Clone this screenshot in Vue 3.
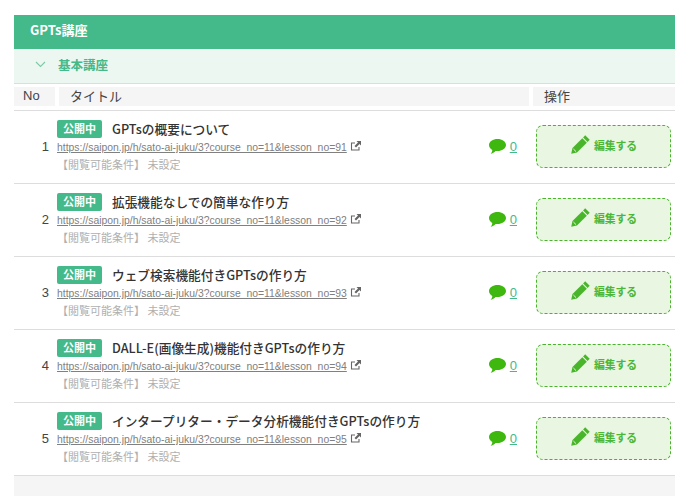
<template>
  <div class="page">
    <div class="panel">
      <div class="head">GPTs講座</div>
      <div class="sub">
        <svg class="chev" width="11" height="7" viewBox="0 0 11 7"><path d="M1 1l4.500 4.500L10 1" fill="none" stroke="#7cc9a8" stroke-width="1.1" /></svg>
        <span>基本講座</span>
      </div>
      <div class="cols">
        <div class="col-no">No</div>
        <div class="col-title">タイトル</div>
        <div class="col-op">操作</div>
      </div>
      <div v-for="l in lessons" :key="l.no" class="row">
        <div class="num">{{ l.no }}</div>
        <div class="info">
          <div class="line1">
            <span class="badge">公開中</span>
            <span class="title">{{ l.title }}</span>
          </div>
          <div class="line2">
            <a class="url">https://saipon.jp/h/sato-ai-juku/3?course_no=11&amp;lesson_no={{ l.id }}</a>
            <svg class="ext" width="12" height="12" viewBox="0 0 12 12">
              <path d="M9 7v3H1.500V3H5" fill="none" stroke="#666" stroke-width="1.1" />
              <path d="M6.500 1H11v4.500L9.500 4 6 7.500 4.500 6 8 2.500z" fill="#666" />
            </svg>
          </div>
          <div class="line3">【閲覧可能条件】 未設定</div>
        </div>
        <div class="comment">
          <svg width="17" height="15" viewBox="0 0 17 15"><path d="M8.500 0C13 0 17 2.600 17 6S13 12 8.500 12c-.7 0-1.300 0-1.900-.1C5.300 13.300 3.500 14.400 1.600 14.800 2.700 13.600 3.300 12.200 3.300 10.900 1.300 9.800 0 8 0 6 0 2.600 4 0 8.500 0z" fill="#3eb80e" /></svg>
          <a class="count">0</a>
        </div>
        <button class="edit">
          <svg width="21" height="21" viewBox="0 0 21 21">
            <path d="M15.200 1.300l4.500 4.500-2.100 2.100-4.500-4.500z" fill="#49b52a" />
            <path d="M12.300 4.200l4.500 4.500L7 18.500l-5.800 1.300L2.500 14z" fill="#49b52a" />
            <path d="M3.400 15l2.600 2.600" stroke="#e9f6e2" stroke-width="1" />
          </svg>
          <span>編集する</span>
        </button>
      </div>
      <div class="foot"></div>
    </div>
  </div>
</template>

<script setup>
const lessons = [
  { no: 1, id: 91, title: 'GPTsの概要について' },
  { no: 2, id: 92, title: '拡張機能なしでの簡単な作り方' },
  { no: 3, id: 93, title: 'ウェブ検索機能付きGPTsの作り方' },
  { no: 4, id: 94, title: 'DALL-E(画像生成)機能付きGPTsの作り方' },
  { no: 5, id: 95, title: 'インタープリター・データ分析機能付きGPTsの作り方' }
]
</script>

<style>
html, body {
  margin: 0;
  background: #fff;
  overflow: hidden;
}
</style>

<style scoped>
.page {
  width: 689px;
  height: 496px;
  padding: 15px 14px 0;
  box-sizing: border-box;
  font-family: "Noto Sans CJK JP", "Liberation Sans", sans-serif;
  color: #333;
  overflow: hidden;
}
.head {
  height: 34px;
  line-height: 30px;
  padding-left: 16px;
  background: #44b98a;
  color: #fff;
  font-size: 13px;
  font-weight: 700;
}
.sub {
  height: 35px;
  display: flex;
  align-items: center;
  background: #ecf7f2;
  border-bottom: 1px solid #ddd;
  box-sizing: border-box;
  color: #44b98a;
  font-size: 12.5px;
  font-weight: 700;
  padding-left: 21px;
  padding-bottom: 3px;
  gap: 12px;
}
.cols {
  display: flex;
  gap: 4px;
  padding-top: 3px;
  padding-bottom: 4px;
  border-bottom: 1px solid #ddd;
  font-size: 13px;
  line-height: 17px;
  color: #444;
}
.cols > div {
  background: #f5f5f5;
  height: 19px;
}
.col-no {
  width: 41px;
  padding-left: 9px;
  box-sizing: border-box;
  font-family: "Liberation Sans", sans-serif;
}
.col-title {
  width: 470px;
  padding-left: 11px;
  box-sizing: border-box;
}
.col-op {
  width: 142px;
  padding-left: 11px;
  box-sizing: border-box;
}
.row {
  height: 73px;
  box-sizing: border-box;
  display: flex;
  align-items: center;
  border-bottom: 1px solid #ddd;
}
.num {
  width: 35px;
  flex: none;
  text-align: right;
  font-family: "Liberation Sans", sans-serif;
  font-size: 13px;
  color: #444;
  padding-bottom: 2px;
}
.info {
  width: 427px;
  flex: none;
  padding-left: 8px;
  padding-bottom: 3px;
  box-sizing: border-box;
}
.line1 {
  display: flex;
  align-items: center;
  height: 18px;
}
.badge {
  width: 45px;
  height: 18px;
  line-height: 17px;
  text-align: center;
  border-radius: 2px;
  background: #44b98a;
  color: #fff;
  font-size: 11px;
  font-weight: 700;
}
.title {
  margin-left: 10px;
  font-size: 12.700px;
  font-weight: 500;
  color: #333;
}
.line2 {
  display: flex;
  align-items: center;
  height: 16px;
  margin-top: 2px;
}
.url {
  font-family: "Liberation Sans", sans-serif;
  font-size: 10.400px;
  color: #808080;
  text-decoration: underline;
  white-space: nowrap;
}
.ext {
  margin-left: 3px;
  margin-top: -3px;
}
.line3 {
  font-size: 11px;
  line-height: 16px;
  color: #b0b0b0;
}
.comment {
  width: 41px;
  flex: none;
  display: flex;
  align-items: center;
  justify-content: flex-end;
  gap: 4px;
  padding-bottom: 2px;
  box-sizing: border-box;
}
.count {
  font-family: "Liberation Sans", sans-serif;
  font-size: 13px;
  color: #44b98a;
  text-decoration: underline;
}
.edit {
  flex: none;
  margin-left: 19px;
  margin-bottom: 2px;
  width: 135px;
  height: 43px;
  display: flex;
  align-items: center;
  justify-content: center;
  gap: 3px;
  padding: 0 0 3px;
  background: #e9f6e2;
  border: 1px dashed #4ab52c;
  border-radius: 7px;
  box-sizing: border-box;
  color: #4cb637;
  font-family: inherit;
  font-size: 10.800px;
  font-weight: 700;
}
.foot {
  height: 21px;
  background: #f5f5f5;
}
</style>
